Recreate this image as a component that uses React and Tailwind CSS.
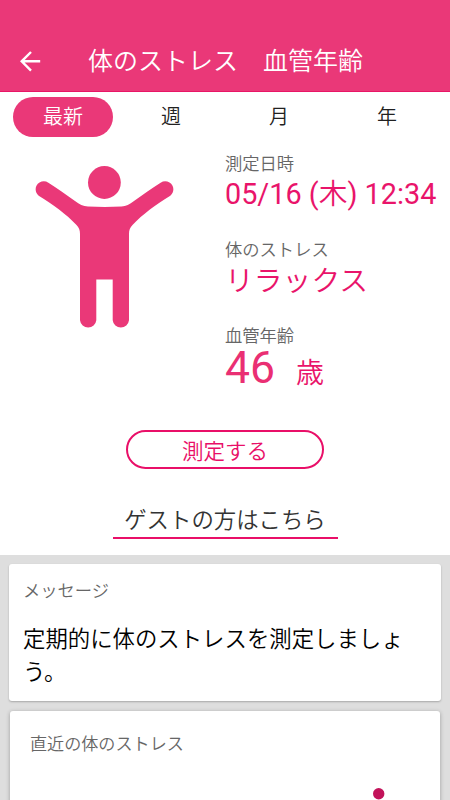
import React from 'react';

const tabs = ['週', '月', '年'];

const BackArrow = () => (
    <svg className="w-[22px] h-[22px]" viewBox="0 0 22 22" fill="none" stroke="currentColor" strokeWidth="2.4">
        <path d="M20.200 11.300H2.500M11 2L1.700 11.300L11 20.600" />
    </svg>
);

const PersonIcon = () => (
    <svg className="w-[140px] h-[164px]" viewBox="0 0 140 164" fill="#ea3878">
        <circle cx="69.400" cy="17.500" r="16.400" />
        <path d="M53 41.500Q69.500 42.300 86.500 41.500C91 41.300 94.500 39.500 99 36C108 29.500 117 23 125.600 17.700C128.500 16 131.500 15.800 134.500 17.600C139.300 20.500 139.700 27 135.300 30.800C120 40.500 108 49 97.500 60C95 62.700 94 65 94 69V155.300A8.200 8.200 0 0 1 77.700 155.300V114.400H61.300V155.300A8.200 8.200 0 0 1 45 155.300V69C45 65 44 62.700 41.500 60C31 49 19 40.500 3.700 30.800C-0.700 27-0.300 20.500 4.500 17.600C7.500 15.800 10.500 16 13.400 17.700C22 23 31 29.500 40 36C44.500 39.500 48 41.300 53 41.500Z" />
    </svg>
);

const Reading = ({ label, children }) => (
    <div className="h-[86px]">
        <p className="h-[26px] text-[17.3px] leading-[26px] text-[#666]">{label}</p>
        {children}
    </div>
);

const App = () => (
    <div className="w-[450px] h-[800px] overflow-hidden flex flex-col bg-white font-['Roboto','Noto_Sans_CJK_JP',sans-serif] font-[350] text-[#212121]">
        <header className="h-[92px] shrink-0 bg-[#ea3878] border-b border-[#e91566] text-white flex items-center pt-[31px] pl-5">
            <BackArrow />
            <h1 className="ml-[46px] pt-px text-[25px] leading-[34px] font-[350]">体のストレス　血管年齢</h1>
        </header>

        <nav className="h-[59px] shrink-0 flex items-start pt-[5px] pl-[13px] text-[20px] leading-[41px]">
            <span className="w-[100px] h-[39.5px] rounded-full bg-[#ea3878] text-white text-center">最新</span>
            <div className="flex ml-[4px]">
                {tabs.map((tab) => (
                    <span key={tab} className="w-[108px] text-center">{tab}</span>
                ))}
            </div>
        </nav>

        <section className="h-[279px] shrink-0 flex">
            <div className="w-[225px] pl-[35px] pt-[14px]">
                <PersonIcon />
            </div>
            <div className="flex-1 whitespace-nowrap text-[#e9146a]">
                <Reading label="測定日時">
                    <p className="text-[28.8px] leading-[35px]">
                        <span className="font-normal">05/16 (</span>木<span className="font-normal">) 12:34</span>
                    </p>
                </Reading>
                <Reading label="体のストレス">
                    <p className="text-[28.8px] leading-[37px]">リラックス</p>
                </Reading>
                <Reading label="血管年齢">
                    <p className="flex items-baseline pt-px leading-[37px]">
                        <span className="text-[44.5px] font-normal text-[#ea2f73]">46</span>
                        <span className="ml-[21px] text-[28px]">歳</span>
                    </p>
                </Reading>
            </div>
        </section>

        <section className="h-[125px] shrink-0 flex flex-col items-center">
            <button className="w-[198px] h-[39px] rounded-full border-2 border-[#e90f68] text-[#e90f68] text-[21.5px] leading-[39px] font-[350]">
                測定する
            </button>
            <a className="mt-[32px] w-[225px] h-[38px] border-b-2 border-[#e90f68] text-center text-[22.4px] leading-[38px] text-[#333]">
                ゲストの方はこちら
            </a>
        </section>

        <main className="flex-1 bg-[#dedede] pt-[9px] px-[9px] flex flex-col gap-[10px]">
            <article className="h-[137px] shrink-0 rounded-[3px] bg-white shadow-[0_1px_2px_rgba(0,0,0,0.25)] pl-[14px] pt-[14px]">
                <h2 className="text-[17.3px] leading-[26px] font-[350] text-[#666]">メッセージ</h2>
                <p className="mt-[19px] w-[390px] text-[22.4px] leading-[33px] text-black">
                    定期的に体のストレスを測定しましょ<br />う。
                </p>
            </article>
            <article className="h-[120px] shrink-0 mx-px rounded-[3px] bg-white shadow-[0_1px_4px_rgba(0,0,0,0.3)] pl-[20px] pt-[20px]">
                <h2 className="text-[17.1px] leading-[26px] font-[350] text-[#666]">直近の体のストレス</h2>
                <svg className="mt-[30px] w-[400px] h-[44px]" viewBox="0 0 400 44">
                    <circle cx="348.700" cy="6.700" r="5.700" fill="#c2125a" />
                </svg>
            </article>
        </main>
    </div>
);

export default App;
